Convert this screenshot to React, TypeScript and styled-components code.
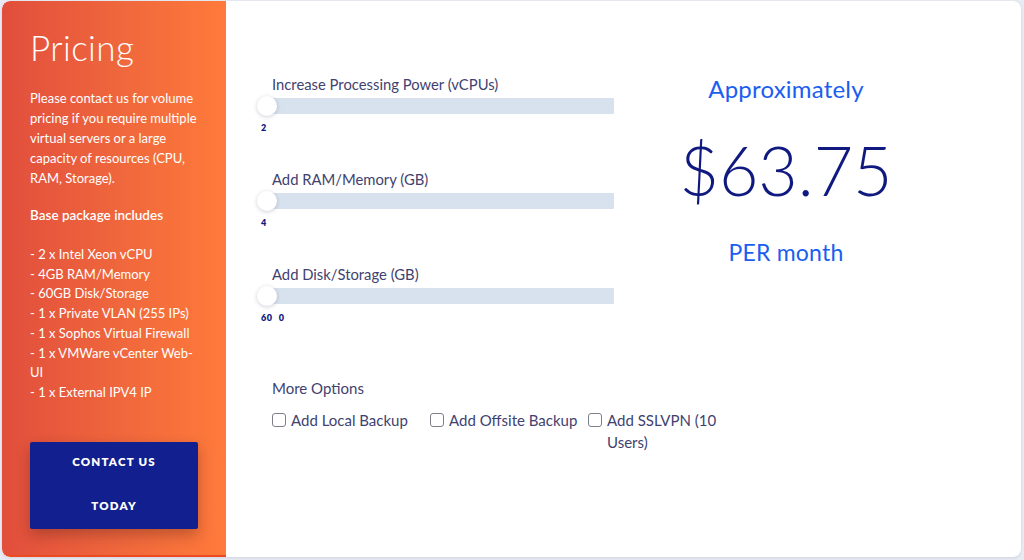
import styled, { createGlobalStyle } from "styled-components";

const GlobalStyle = createGlobalStyle`
  html, body {
    margin: 0;
    padding: 0;
    background: #e8ebf3;
  }
  body {
    font-family: "Lato", "Noto Sans", sans-serif;
  }
`;

const packageItems = [
  "- 2 x Intel Xeon vCPU",
  "- 4GB RAM/Memory",
  "- 60GB Disk/Storage",
  "- 1 x Private VLAN (255 IPs)",
  "- 1 x Sophos Virtual Firewall",
  "- 1 x VMWare vCenter Web-UI",
  "- 1 x External IPV4 IP",
];

const sliders = [
  { label: "Increase Processing Power (vCPUs)", min: 2, max: 32, value: 2, marks: ["2"] },
  { label: "Add RAM/Memory (GB)", min: 4, max: 256, value: 4, marks: ["4"] },
  { label: "Add Disk/Storage (GB)", min: 60, max: 2000, value: 60, marks: ["60", "0"] },
];

const options = ["Add Local Backup", "Add Offsite Backup", "Add SSLVPN (10 Users)"];

const App = () => {
  return (
    <Page>
      <GlobalStyle />
      <Card>
        <InfoPanel>
          <Title>Pricing</Title>
          <Intro>
            Please contact us for volume pricing if you require multiple virtual servers or a
            large capacity of resources (CPU, RAM, Storage).
          </Intro>
          <SubTitle>Base package includes</SubTitle>
          <PackageList>
            {packageItems.map((item) => (
              <li key={item}>{item}</li>
            ))}
          </PackageList>
          <ContactButton>
            <span>CONTACT US TODAY</span>
          </ContactButton>
        </InfoPanel>
        <Calculator>
          <SliderColumn>
            {sliders.map((s) => (
              <SliderGroup key={s.label}>
                <SliderLabel>{s.label}</SliderLabel>
                <Range type="range" min={s.min} max={s.max} defaultValue={s.value} />
                <Marks>
                  {s.marks.map((m, i) => (
                    <span key={i}>{m}</span>
                  ))}
                </Marks>
              </SliderGroup>
            ))}
          </SliderColumn>
          <PriceColumn>
            <PriceCaption size={24}>Approximately</PriceCaption>
            <Price>$63.75</Price>
            <PriceCaption size={23}>PER month</PriceCaption>
          </PriceColumn>
          <Options>
            <OptionsTitle>More Options</OptionsTitle>
            <OptionGrid>
              {options.map((o) => (
                <OptionLabel key={o}>
                  <Check type="checkbox" />
                  <span>{o}</span>
                </OptionLabel>
              ))}
            </OptionGrid>
          </Options>
        </Calculator>
      </Card>
    </Page>
  );
};

const Page = styled.div`
  width: 1024px;
  height: 560px;
  padding: 1px 3px 3px 2px;
  box-sizing: border-box;
  background: #e8ebf3;
`;

const Card = styled.div`
  display: grid;
  grid-template-columns: 224px 1fr;
  height: 556px;
  background: #ffffff;
  border-radius: 8px;
  overflow: hidden;
  box-shadow: 0 1px 3px rgba(40, 50, 90, 0.12);
`;

const InfoPanel = styled.div`
  display: flex;
  flex-direction: column;
  padding: 26px 24px 0 28px;
  background: linear-gradient(90deg, #e14e3c 0%, #f0683c 55%, #ff7a3b 100%);
  border-bottom: 2px solid #ee4a22;
  color: #ffffff;
  border-radius: 8px 0 0 8px;
`;

const Title = styled.h1`
  margin: 0;
  font-size: 35px;
  line-height: 40px;
  font-weight: 300;
  letter-spacing: 0.4px;
`;

const Intro = styled.p`
  margin: 21px 0 0;
  font-size: 13px;
  line-height: 20px;
`;

const SubTitle = styled.h3`
  margin: 17px 0 0;
  font-size: 13.5px;
  line-height: 20px;
  font-weight: 600;
`;

const PackageList = styled.ul`
  margin: 20px 0 0;
  padding: 0;
  list-style: none;
  font-size: 13px;
  line-height: 19.7px;
`;

const ContactButton = styled.button`
  display: flex;
  align-items: center;
  justify-content: center;
  width: 168px;
  height: 87px;
  margin-top: 39px;
  padding: 0 30px;
  border: none;
  border-radius: 2px;
  background: #121f8f;
  color: #ffffff;
  font-family: "Lato", sans-serif;
  font-size: 11.5px;
  font-weight: 800;
  letter-spacing: 1.2px;
  line-height: 44px;
  text-align: center;
  box-shadow: 0 6px 14px rgba(60, 20, 20, 0.3);

  span {
    margin-top: -3px;
  }
`;

const Calculator = styled.div`
  display: grid;
  grid-template-columns: 357px 344px;
  grid-template-rows: auto auto;
  align-content: start;
  padding: 73px 0 0 31px;
`;

const SliderColumn = styled.div`
  display: flex;
  flex-direction: column;
  gap: 35px;
`;

const SliderGroup = styled.div`
  display: flex;
  flex-direction: column;
`;

const SliderLabel = styled.label`
  padding-left: 15px;
  font-size: 14.8px;
  line-height: 20px;
  color: #3f4270;
`;

const Range = styled.input`
  -webkit-appearance: none;
  appearance: none;
  width: 357px;
  height: 20px;
  margin: 2px 0 0;
  background: transparent;

  &::-webkit-slider-runnable-track {
    height: 16px;
    background: linear-gradient(90deg, transparent 0 10px, #d8e2ee 10px);
    border-radius: 1px;
  }
  &::-webkit-slider-thumb {
    -webkit-appearance: none;
    width: 20px;
    height: 20px;
    margin-top: -2px;
    border-radius: 50%;
    background: #ffffff;
    box-shadow: 0 1px 4px rgba(30, 40, 80, 0.22);
  }
`;

const Marks = styled.div`
  display: flex;
  gap: 6px;
  padding-left: 4px;
  margin-top: 6px;
  font-size: 9px;
  line-height: 12px;
  font-weight: 800;
  letter-spacing: 0.6px;
  color: #10197f;
`;

const PriceColumn = styled.div`
  display: flex;
  flex-direction: column;
  align-items: center;
`;

const PriceCaption = styled.div<{ size: number }>`
  font-size: ${({ size }) => size}px;
  line-height: 30px;
  color: #1a5ef0;
  letter-spacing: 0.2px;
`;

const Price = styled.div`
  margin: 26px 0 27px;
  font-size: 68px;
  line-height: 80px;
  font-weight: 300;
  color: #10197f;
`;

const Options = styled.div`
  grid-column: 1 / -1;
  padding: 54px 0 0 15px;
`;

const OptionsTitle = styled.div`
  font-size: 15px;
  line-height: 20px;
  color: #3f4270;
`;

const OptionGrid = styled.div`
  display: grid;
  grid-template-columns: repeat(3, 158px);
  margin-top: 11px;
`;

const OptionLabel = styled.label`
  display: flex;
  align-items: flex-start;
  gap: 5px;
  font-size: 15px;
  line-height: 22px;
  color: #3f4270;
  span {
    max-width: 130px;
  }
`;

const Check = styled.input`
  appearance: none;
  -webkit-appearance: none;
  box-sizing: border-box;
  width: 14px;
  height: 14px;
  margin: 4px 0 0;
  flex-shrink: 0;
  border: 1px solid #7d7f8c;
  border-radius: 3px;
  background: #ffffff;
`;

export default App;
